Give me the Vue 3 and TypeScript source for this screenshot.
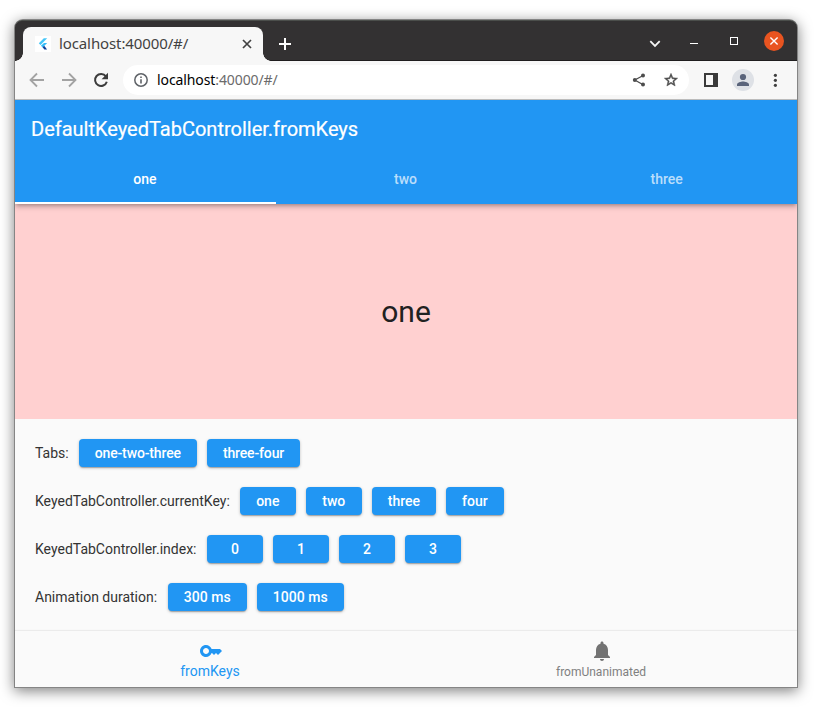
<script setup lang="ts">
import { ref } from 'vue'

interface ControlRow {
  label: string
  options: string[]
  kind: 'sets' | 'keys' | 'indices' | 'durations'
}

const tabs = ['one', 'two', 'three']
const currentTab = ref('one')

const rows: ControlRow[] = [
  { label: 'Tabs:', options: ['one-two-three', 'three-four'], kind: 'sets' },
  { label: 'KeyedTabController.currentKey:', options: ['one', 'two', 'three', 'four'], kind: 'keys' },
  { label: 'KeyedTabController.index:', options: ['0', '1', '2', '3'], kind: 'indices' },
  { label: 'Animation duration:', options: ['300 ms', '1000 ms'], kind: 'durations' },
]

function press(row: ControlRow, index: number) {
  if ((row.kind === 'keys' || row.kind === 'indices') && index < tabs.length) {
    currentTab.value = tabs[index]
  }
}
</script>

<template>
  <div class="desktop">
    <main class="window">
      <header class="titlebar">
        <div class="browser-tab">
          <span class="favicon">
            <svg width="16" height="16" viewBox="0 0 16 16">
              <path d="M8.8 2.2h3.4L5.5 9 3.8 7.3z" fill="#45c6f8" />
              <path d="M9 7h3.2L9.4 9.8l-1.6 1.7-1.9-1.7z" fill="#36bdf8" />
              <path d="M7.6 11.3l1.6-1.5 2.9 3.6H9.4z" fill="#0a3f9c" />
            </svg>
          </span>
          <span class="tab-title">localhost:40000/#/</span>
          <svg class="tab-close" width="10" height="10" viewBox="0 0 10 10">
            <path d="M1 1l8 8M9 1L1 9" stroke="#414141" stroke-width="1.7" fill="none" />
          </svg>
        </div>
        <svg class="new-tab" width="14" height="14" viewBox="0 0 14 14">
          <path d="M7 1v12M1 7h12" stroke="#fff" stroke-width="2" fill="none" />
        </svg>
        <div class="window-controls">
          <svg class="tab-search" width="12" height="8" viewBox="0 0 12 8">
            <path d="M1.3 1.2L6 5.9l4.7-4.7" stroke="#f5f5f5" stroke-width="1.8" fill="none" />
          </svg>
          <span class="minimize"></span>
          <span class="maximize"></span>
          <span class="close">
            <svg width="20" height="20" viewBox="0 0 20 20">
              <path d="M6.4 6.4l7.2 7.2M13.6 6.4l-7.2 7.2" stroke="#fff" stroke-width="1.4" fill="none" />
            </svg>
          </span>
        </div>
      </header>

      <nav class="toolbar">
        <svg class="nav-icon" width="16" height="16" viewBox="0 0 16 16">
          <path d="M15 8H2M8 1.5L1.5 8 8 14.5" stroke="#a3a3a3" stroke-width="1.8" fill="none" />
        </svg>
        <svg class="nav-icon" width="16" height="16" viewBox="0 0 16 16">
          <path d="M1 8h13M8 1.5L14.5 8 8 14.5" stroke="#a3a3a3" stroke-width="1.8" fill="none" />
        </svg>
        <svg class="nav-icon" width="16" height="16" viewBox="0 0 16 16">
          <path d="M12.9 4.4A6 6 0 1 0 13.8 9.7" stroke="#3c3c3c" stroke-width="2" fill="none" />
          <path d="M15 .8v6.4H8.6z" fill="#3c3c3c" />
        </svg>
        <div class="omnibox">
          <svg width="14" height="14" viewBox="0 0 14 14">
            <circle cx="7" cy="7" r="6.2" stroke="#5f6368" stroke-width="1.5" fill="none" />
            <path d="M6.2 6.2h1.6v4.3H6.2zM6.2 3.5h1.6v1.6H6.2z" fill="#5f6368" />
          </svg>
          <span class="url"><b>localhost</b>:40000/#/</span>
          <svg class="share" width="16" height="16" viewBox="0 0 16 16">
            <path d="M12.2 3.5L3.8 8l8.4 4.7" stroke="#4d4d4d" stroke-width="1.3" fill="none" />
            <g fill="#4d4d4d">
              <circle cx="12" cy="3.5" r="2" />
              <circle cx="3.8" cy="8" r="2" />
              <circle cx="12" cy="12.6" r="2" />
            </g>
          </svg>
          <svg class="star" width="16" height="16" viewBox="0 0 24 24">
            <path d="M22 9.24l-7.19-.62L12 2 9.19 8.63 2 9.24l5.46 4.73L5.82 21 12 17.27 18.18 21l-1.63-7.03L22 9.24zM12 15.4l-3.76 2.27 1-4.28-3.32-2.88 4.38-.38L12 6.1l1.71 4.04 4.38.38-3.32 2.88 1 4.28L12 15.4z" fill="#4a4a4a" stroke="#4a4a4a" stroke-width=".7" />
          </svg>
        </div>
        <span class="side-panel"></span>
        <span class="profile">
          <svg width="22" height="22" viewBox="0 0 22 22">
            <circle cx="11" cy="8" r="3.1" fill="#59637a" />
            <path d="M5 17v-1.4c0-2.2 4-3.1 6-3.1s6 .9 6 3.1V17z" fill="#59637a" />
          </svg>
        </span>
        <svg class="menu" width="4" height="14" viewBox="0 0 4 14">
          <g fill="#3f3f3f">
            <circle cx="2.4" cy="2.3" r="1.6" />
            <circle cx="2.4" cy="7.3" r="1.6" />
            <circle cx="2.4" cy="12.3" r="1.6" />
          </g>
        </svg>
      </nav>

      <section class="app">
        <header class="appbar">
          <h1>DefaultKeyedTabController.fromKeys</h1>
          <div class="tabs">
            <button
              v-for="tab in tabs"
              :key="tab"
              class="tab"
              :class="{ active: tab === currentTab }"
              @click="currentTab = tab"
            >
              {{ tab }}
            </button>
          </div>
        </header>

        <div class="tab-view">{{ currentTab }}</div>

        <div class="controls">
          <div v-for="row in rows" :key="row.label" class="row" :class="row.kind">
            <span class="label">{{ row.label }}</span>
            <button v-for="(option, i) in row.options" :key="option" class="raised" @click="press(row, i)">
              {{ option }}
            </button>
          </div>
        </div>

        <footer class="bottom-nav">
          <div class="destination selected">
            <svg width="24" height="24" viewBox="0 0 24 24">
              <path d="M21 10h-8.35C11.83 7.67 9.61 6 7 6c-3.31 0-6 2.69-6 6s2.69 6 6 6c2.61 0 4.83-1.67 5.65-4H13l2 2 2-2 2 2 4-4.04L21 10zM7 15c-1.65 0-3-1.35-3-3s1.35-3 3-3 3 1.35 3 3-1.35 3-3 3z" fill="currentColor" />
            </svg>
            <span>fromKeys</span>
          </div>
          <div class="destination">
            <svg width="24" height="24" viewBox="0 0 24 24">
              <path d="M12 22c1.1 0 2-.9 2-2h-4c0 1.1.89 2 2 2zm6-6v-5c0-3.07-1.64-5.64-4.5-6.32V4c0-.83-.67-1.5-1.5-1.5s-1.5.67-1.5 1.5v.68C7.63 5.36 6 7.92 6 11v5l-2 2v1h16v-1l-2-2z" fill="#737373" />
            </svg>
            <span>fromUnanimated</span>
          </div>
        </footer>
      </section>
    </main>
  </div>
</template>

<style>
body {
  margin: 0;
  background: #fff;
}
</style>

<style scoped>
* {
  box-sizing: border-box;
}

svg {
  display: block;
  flex: none;
}

button {
  border: 0;
  padding: 0;
  font: inherit;
  cursor: pointer;
}

.desktop {
  width: 818px;
  height: 711px;
  padding: 20px 21px 24px 15px;
  overflow: hidden;
}

.window {
  display: flex;
  flex-direction: column;
  width: 782px;
  height: 667px;
  border-radius: 8px 8px 0 0;
  box-shadow: 0 0 0 1px #858585, 0 3px 14px 1px rgba(0, 0, 0, 0.5);
}

.titlebar {
  display: flex;
  align-items: flex-start;
  height: 41px;
  background: #333132;
  border-bottom: 1px solid #1f1d1e;
  border-top: 1px solid #4b4e4b;
  border-radius: 7px 7px 0 0;
}

.browser-tab {
  position: relative;
  display: flex;
  align-items: center;
  width: 240px;
  height: 34px;
  margin: 6px 0 0 8px;
  padding: 0 11px 0 12px;
  background: #f7f7f7;
  border-radius: 8px 8px 0 0;
}

.browser-tab::before,
.browser-tab::after {
  content: '';
  position: absolute;
  bottom: 0;
  width: 8px;
  height: 8px;
}

.browser-tab::before {
  left: -8px;
  background: radial-gradient(circle at 0 0, transparent 7.5px, #f7f7f7 8px);
}

.browser-tab::after {
  right: -8px;
  background: radial-gradient(circle at 100% 0, transparent 7.5px, #f7f7f7 8px);
}

.favicon {
  background: #fff;
}

.tab-title {
  flex: 1;
  margin-left: 8px;
  padding-bottom: 2px;
  font: 15px/20px 'Noto Sans', sans-serif;
  letter-spacing: -0.11px;
  color: #424242;
}

.new-tab {
  margin: 16px 0 0 15px;
}

.window-controls {
  display: flex;
  align-items: center;
  height: 20px;
  margin: 10px 13px 0 auto;
}

.tab-search {
  margin-top: 6px;
}

.minimize {
  width: 8px;
  height: 1px;
  margin: 5px 0 0 29px;
  background: #fff;
}

.maximize {
  width: 8px;
  height: 8px;
  margin-left: 32px;
  border: 1px solid #fff;
}

.close {
  margin-left: 26px;
  border-radius: 50%;
  background: #e95420;
}

.toolbar {
  display: flex;
  align-items: center;
  height: 39px;
  padding: 0 20px 0 14px;
  background: #f7f7f7;
  border-bottom: 1px solid #bcbcbc;
}

.nav-icon {
  margin-right: 16px;
}

.omnibox {
  display: flex;
  align-items: center;
  width: 566px;
  height: 30px;
  margin-left: -2px;
  padding: 0 10px 0 11px;
  background: #fff;
  border-radius: 15px;
}

.url {
  flex: 1;
  margin-left: 9px;
  font: 14px/20px 'Noto Sans', sans-serif;
  letter-spacing: -0.1px;
  color: #6b6b6b;
}

.url b {
  font-weight: 400;
  color: #000;
}

.star {
  margin-left: 16px;
}

.side-panel {
  width: 14px;
  height: 14px;
  margin-left: 15px;
  border: 2px solid #3a3a3a;
  border-right-width: 5px;
}

.profile {
  margin-left: 14px;
  border-radius: 50%;
  background: #dee1e6;
}

.menu {
  margin-left: auto;
}

.app {
  display: flex;
  flex: 1;
  flex-direction: column;
  background: #fafafa;
  font-family: Roboto, sans-serif;
}

.appbar {
  position: relative;
  height: 104px;
  background: #2196f3;
  box-shadow: 0 2px 4px -1px rgba(0, 0, 0, 0.3), 0 4px 5px rgba(0, 0, 0, 0.12);
  clip-path: inset(0 0 -12px 0);
}

h1 {
  height: 56px;
  margin: 0;
  padding: 1px 16px;
  color: #fff;
  font-size: 20px;
  font-weight: 400;
  line-height: 56px;
  -webkit-text-stroke: 0.2px #fff;
}

.tabs {
  display: grid;
  grid-template-columns: repeat(3, 1fr);
  height: 48px;
}

.tab {
  padding-right: 1px;
  background: none;
  border-bottom: 2px solid transparent;
  color: rgba(255, 255, 255, 0.7);
  font-size: 14px;
  font-weight: 500;
}

.tab:last-child {
  padding-right: 0;
}

.tab.active {
  border-color: #fff;
  color: #fff;
}

.tab-view {
  display: flex;
  align-items: center;
  justify-content: center;
  height: 215px;
  background: #ffd0d0;
  color: #212121;
  font-size: 30px;
}

.controls {
  display: flex;
  flex: 1;
  flex-direction: column;
  gap: 20px;
  padding: 20px;
}

.row {
  display: flex;
  align-items: center;
  gap: 10px;
  height: 28px;
}

.label {
  color: #333;
  font-size: 14px;
}

.indices .label,
.durations .label {
  padding-right: 0.5px;
}

.raised {
  min-width: 56px;
  height: 28px;
  padding: 0 16px;
  border-radius: 4px;
  background: #2196f3;
  box-shadow: 0 2px 1px -1px rgba(0, 0, 0, 0.2), 0 1px 3px rgba(0, 0, 0, 0.25);
  color: #fff;
  font-size: 14px;
  font-weight: 500;
}

.sets .raised {
  letter-spacing: -0.14px;
}

.durations .raised {
  letter-spacing: 0.06px;
}

.bottom-nav {
  display: grid;
  grid-template-columns: 1fr 1fr;
  height: 56px;
  box-shadow: 0 -1px 1px rgba(0, 0, 0, 0.06);
}

.destination {
  display: flex;
  flex-direction: column;
  align-items: center;
  padding-top: 8px;
  color: #808080;
  font-size: 12px;
  line-height: 18px;
}

.destination span {
  padding-right: 1px;
}

.selected {
  color: #2196f3;
  font-size: 14px;
  line-height: 16px;
}
</style>
